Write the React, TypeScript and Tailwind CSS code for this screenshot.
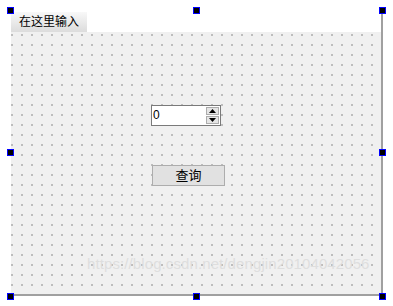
const Handle = ({ x, y }: { x: number; y: number }) => (
  <div
    className="absolute w-[7px] h-[7px] bg-black border border-[#0000ff] box-border"
    style={{ left: x, top: y }}
  />
);

const dots =
  "radial-gradient(circle at 1px 1px, #a0a0a0 0.7px, transparent 0.72px)";

export default function App() {
  const handles = [
    [7, 7],
    [193, 7],
    [379, 7],
    [7, 149],
    [379, 149],
    [7, 293],
    [193, 293],
    [379, 293],
  ];
  return (
    <div className="relative w-[393px] h-[306px] bg-white overflow-hidden font-['Liberation_Sans','Noto_Sans_CJK_SC',sans-serif]">
      <div className="absolute left-[11px] top-[12px] w-[372px] h-[284px] flex flex-col border-r-2 border-b-2 border-[#a0a0a0] box-border">
        <div className="h-[20px] flex bg-white">
          <div className="w-[76px] h-full bg-gradient-to-b from-[#f8f8f8] to-[#dcdcdc] text-[12px] leading-[20px] text-black pl-[8px]">
            在这里输入
          </div>
        </div>
        <div
          className="relative flex-1 bg-[#f0f0f0]"
          style={{ backgroundImage: dots, backgroundSize: "10px 10px", backgroundPosition: "0px 2px" }}
        >
          <div className="absolute left-[140px] top-[73px] w-[70px] h-[21px] flex border border-[#7a7a7a] bg-white box-border">
            <div className="flex-1 text-[12px] leading-[19px] pl-[1px] text-black">0</div>
            <div className="w-[15px] flex flex-col p-[1px] gap-[1px]">
              <div className="flex-1 bg-[#e5e5e5] border border-[#acacac] flex items-center justify-center">
                <svg width="7" height="4" viewBox="0 0 7 4"><path d="M3.5 0 L7 4 L0 4 Z" fill="#000" /></svg>
              </div>
              <div className="flex-1 bg-[#e5e5e5] border border-[#acacac] flex items-center justify-center">
                <svg width="7" height="4" viewBox="0 0 7 4"><path d="M0 0 L7 0 L3.5 4 Z" fill="#000" /></svg>
              </div>
            </div>
          </div>
          <div className="absolute left-[141px] top-[133px] w-[73px] h-[21px] bg-[#e1e1e1] border border-[#adadad] box-border flex items-center justify-center text-[13px] text-black">
            查询
          </div>
          <div className="absolute left-[76px] top-[221px] text-[15px] text-[#dedede] whitespace-nowrap tracking-[0.1px]">
            https://blog.csdn.net/dengjin20104042056
          </div>
        </div>
      </div>
      {handles.map(([x, y], i) => (
        <Handle key={i} x={x} y={y} />
      ))}
    </div>
  );
}
